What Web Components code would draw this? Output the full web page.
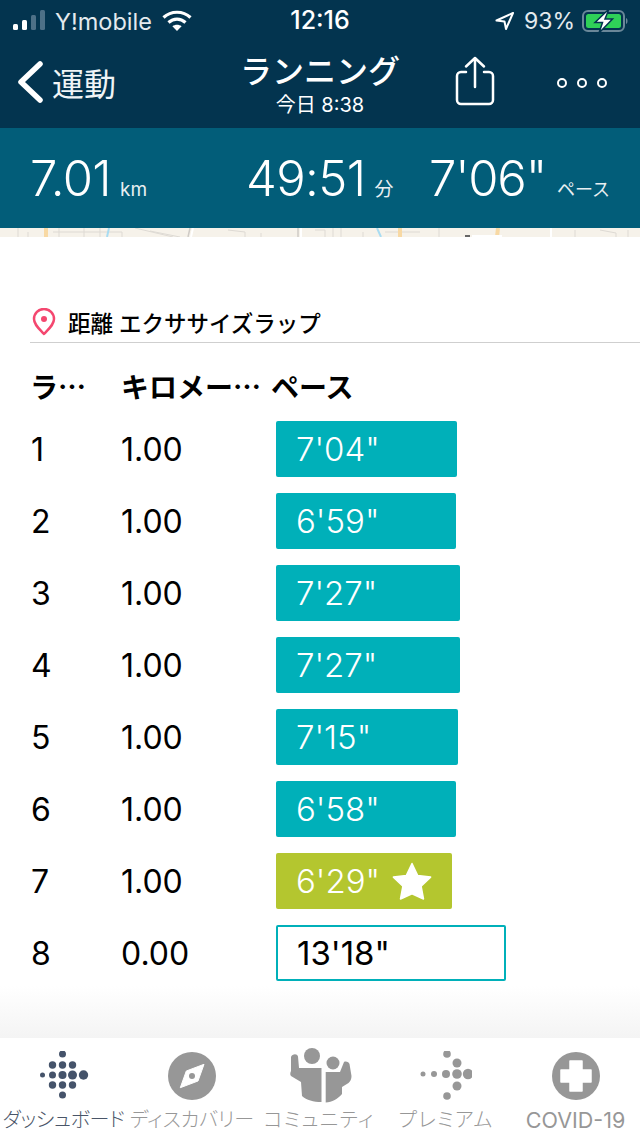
<!DOCTYPE html>
<html lang="ja">
<head>
<meta charset="utf-8">
<title>ランニング</title>
<style>
html, body { margin: 0; padding: 0; background: #fff; }
body { width: 640px; height: 1136px; overflow: hidden; display: flex; flex-direction: column; font-family: Inter, "Noto Sans CJK JP", sans-serif; }
</style>
</head>
<body>
<fit-status-bar></fit-status-bar>
<fit-nav-bar title="ランニング" subtitle="今日 8:38" back="運動"></fit-nav-bar>
<fit-summary></fit-summary>
<fit-map-strip></fit-map-strip>
<fit-lap-table>
    <fit-lap-row lap="1" km="1.00" pace="7'04&quot;" width="181"></fit-lap-row>
    <fit-lap-row lap="2" km="1.00" pace="6'59&quot;" width="180"></fit-lap-row>
    <fit-lap-row lap="3" km="1.00" pace="7'27&quot;" width="184"></fit-lap-row>
    <fit-lap-row lap="4" km="1.00" pace="7'27&quot;" width="184"></fit-lap-row>
    <fit-lap-row lap="5" km="1.00" pace="7'15&quot;" width="182"></fit-lap-row>
    <fit-lap-row lap="6" km="1.00" pace="6'58&quot;" width="180"></fit-lap-row>
    <fit-lap-row lap="7" km="1.00" pace="6'29&quot;" width="176" kind="best"></fit-lap-row>
    <fit-lap-row lap="8" km="0.00" pace="13'18&quot;" width="230" kind="partial"></fit-lap-row>
</fit-lap-table>
<fit-tab-bar></fit-tab-bar>

<script>
class FitStatusBar extends HTMLElement {
    constructor() {
        super();
        this.attachShadow({ mode: "open" });
    }

    connectedCallback() {
        this.shadowRoot.innerHTML = `
            <style>
                :host { display: flex; align-items: center; height: 40px; flex: none; box-sizing: border-box; padding: 2px 0 0 13px; background: #03344f; color: #fff; font-size: 23.500px; position: relative; }
                .left, .right { display: flex; align-items: center; }
                .carrier { margin-left: 9px; color: #e4eaee; }
                .wifi { margin-left: 10px; }
                .time { position: absolute; left: 0; right: 0; top: 7px; text-align: center; font-weight: 500; font-size: 25px; line-height: 27px; }
                .right { margin-left: auto; color: #e4eaee; }
                .pct { margin: 0 7px 0 9px; font-size: 23px; }
                .battery { margin-right: 11px; }
            </style>
            <div class="left">
                <svg width="33" height="22" viewBox="0 0 33 22">
                    <rect x="0" y="14" width="5" height="6" rx="1.500" fill="#fff"/>
                    <rect x="9" y="10" width="5" height="10" rx="1.500" fill="#fff"/>
                    <rect x="18" y="5" width="5" height="15" rx="1.500" fill="#4d7087"/>
                    <rect x="27" y="0" width="5" height="20" rx="1.500" fill="#4d7087"/>
                </svg>
                <span class="carrier">Y!mobile</span>
                <svg class="wifi" width="30" height="22" viewBox="0 0 30 22" fill="none" stroke="#fff" stroke-width="3.200">
                    <path d="M1.500 7.500C9 .5 21 .5 28.500 7.500"/>
                    <path d="M6.500 12.500C11.500 8 18.500 8 23.500 12.500"/>
                    <path d="M15 21l-4.600-4.800c2.600-2 6.600-2 9.200 0z" fill="#fff" stroke="none"/>
                </svg>
            </div>
            <div class="time">12:16</div>
            <div class="right">
                <svg width="20" height="20" viewBox="0 0 20 20" fill="none" stroke="#fff" stroke-width="2" stroke-linejoin="round"><path d="M18 2L1.500 9.500l8 1 1.500 7.500z"/></svg>
                <span class="pct">93%</span>
                <svg class="battery" width="47" height="26" viewBox="0 0 47 26">
                    <rect x="1" y="3" width="41" height="20" rx="5" fill="none" stroke="#6a8799" stroke-width="2"/>
                    <rect x="4" y="6" width="35" height="14" rx="2.500" fill="#2fd158"/>
                    <path d="M44 10c2 .5 2 5.500 0 6z" fill="#6a8799"/>
                    <path d="M27 1L13 14.500h7.500L17 25l13.500-14H23z" fill="#fff" stroke="#03344f" stroke-width="1.500"/>
                </svg>
            </div>
        `;
    }
}

class FitNavBar extends HTMLElement {
    constructor() {
        super();
        this.attachShadow({ mode: "open" });
    }

    connectedCallback() {
        this.shadowRoot.innerHTML = `
            <style>
                :host { display: flex; align-items: center; flex: none; height: 88px; box-sizing: border-box; background: #03344f; color: #fff; position: relative; padding-left: 17px; }
                .back { display: flex; align-items: center; gap: 9px; font-size: 32px; color: #f0f4f6; margin-top: -4px; }
                .title { position: absolute; left: 160px; width: 320px; top: 14px; text-align: center; }
                .main { font-size: 32px; font-weight: 500; line-height: 36px; }
                .sub { font-size: 20px; line-height: 24px; margin-top: 3px; }
                .share { position: absolute; left: 455px; top: 16px; }
                .more { position: absolute; left: 557px; top: 38px; display: flex; gap: 10px; }
                .more i { display: block; width: 10px; height: 10px; border: 2px solid #fff; border-radius: 50%; box-sizing: border-box; }
            </style>
            <div class="back">
                <svg width="26" height="42" viewBox="0 0 26 42" fill="none" stroke="#fff" stroke-width="5.500" stroke-linecap="round" stroke-linejoin="round"><path d="M23 3L4 21l19 18"/></svg>
                <span>${this.getAttribute('back')}</span>
            </div>
            <div class="title">
                <div class="main">${this.getAttribute('title')}</div>
                <div class="sub">${this.getAttribute('subtitle')}</div>
            </div>
            <svg class="share" width="40" height="50" viewBox="0 0 40 50" fill="none" stroke="#fff" stroke-width="2.500" stroke-linecap="round" stroke-linejoin="round">
                <path d="M11 16H6a4 4 0 0 0-4 4v24a4 4 0 0 0 4 4h28a4 4 0 0 0 4-4V20a4 4 0 0 0-4-4h-5"/>
                <path d="M20 31V2M11 10.500L20 2l9 8.500"/>
            </svg>
            <div class="more"><i></i><i></i><i></i></div>
        `;
    }
}

class FitSummary extends HTMLElement {
    constructor() {
        super();
        this.attachShadow({ mode: "open" });
    }

    connectedCallback() {
        this.shadowRoot.innerHTML = `
            <style>
                :host { display: block; flex: none; height: 100px; background: #025d79; color: #fff; position: relative; }
                div { position: absolute; top: 21px; white-space: nowrap; font-weight: 300; font-size: 49px; line-height: 60px; letter-spacing: -.6px; }
                small { font-size: 19px; font-weight: 400; margin-left: 9px; color: #e8eff2; letter-spacing: 0; }
            </style>
            <div style="left: 30px">7.01<small>km</small></div>
            <div style="left: 246px">49:51<small>分</small></div>
            <div style="left: 429px; letter-spacing: -1.200px">7'06"<small style="margin-left: 11px; font-size: 18px">ペース</small></div>
        `;
    }
}

class FitMapStrip extends HTMLElement {
    constructor() {
        super();
        this.attachShadow({ mode: "open" });
    }

    connectedCallback() {
        this.shadowRoot.innerHTML = `
            <style>
                :host { display: block; flex: none; height: 9px; background: #f6f2ea; }
                svg { display: block; }
            </style>
            <svg width="640" height="9" viewBox="0 0 640 9" fill="none" stroke="#dedad4" stroke-width="1">
                <path d="M18 0v9M28 4v5M59 0v9M53 4h69M84 0v9M100 0v9M122 4v5M135 0l38 9M150 3l30 6M228 2l17 2v5M261 5v4M315 2h10v7M333 0v9M341 0v9M363 4v5M385 4h35M439 0v9M575 2v7M600 2l16 3v4M628 2v7"/>
                <path d="M190 0l-2 9M298 0v9" stroke="#cfcbc6" stroke-width="1.500"/>
                <path d="M193 0l-2 9M301 0v9M551 0v9" stroke="#ffffff" stroke-width="2"/>
                <path d="M46 0v9M400 0v9M498 0l-1 9" stroke="#f8d9a4" stroke-width="4"/>
                <path d="M109 0l-2 9M377 0l4 9" stroke="#a8dcf2" stroke-width="2"/>
                <path d="M472 8h30" stroke="#fff" stroke-width="2"/>
                <path d="M465 8h5" stroke="#666" stroke-width="2"/>
            </svg>
        `;
    }
}

class FitLapTable extends HTMLElement {
    constructor() {
        super();
        this.attachShadow({ mode: "open" });
    }

    connectedCallback() {
        this.shadowRoot.innerHTML = `
            <style>
                :host { display: block; flex: 1; min-height: 0; position: relative; overflow: hidden; background: #fff; color: #000; padding: 72px 0 0 30px; }
                .heading { display: flex; align-items: center; gap: 11px; height: 34px; box-sizing: border-box; border-bottom: 1px solid #cfcfcf; font-size: 22.500px; font-weight: 500; padding-bottom: 7px; white-space: nowrap; }
                .cols { display: flex; align-items: center; height: 54px; margin-top: 16px; font-size: 28px; font-weight: 700; }
                .cols span { white-space: nowrap; font-family: "Noto Sans CJK JP", sans-serif; }
                .rows { display: flex; flex-direction: column; gap: 16px; margin-top: 8px; }
                .fade { position: absolute; left: 0; right: 0; bottom: 0; height: 52px; background: linear-gradient(rgba(244,244,244,0), #f4f4f4); pointer-events: none; }
            </style>
            <div class="heading">
                <svg width="26" height="28" viewBox="0 0 26 28" style="margin-left:1px">
                    <path d="M13 26C8 20.500 3 16.500 3 11a10 10 0 0 1 20 0c0 5.500-5 9.500-10 15z" fill="none" stroke="#f4476f" stroke-width="2.500" stroke-linejoin="round"/>
                    <circle cx="13" cy="11" r="3" fill="#f4476f"/>
                </svg>
                <span>距離 エクササイズラップ</span>
            </div>
            <div class="cols">
                <span style="width: 91px">ラ…</span>
                <span style="width: 150px">キロメー…</span>
                <span>ペース</span>
            </div>
            <div class="rows"><slot></slot></div>
            <div class="fade"></div>
        `;
    }
}

class FitLapRow extends HTMLElement {
    constructor() {
        super();
        this.attachShadow({ mode: "open" });
    }

    connectedCallback() {
        const kind = this.getAttribute('kind') ?? 'normal';
        const star = kind === 'best'
            ? `<svg width="40" height="38" viewBox="0 0 40 38"><path d="M20 1.500l5.600 11.900 13 1.700-9.500 9 2.400 12.900L20 31.700 8.500 37l2.400-12.900-9.500-9 13-1.700z" fill="#fff" stroke="#fff" stroke-width="1.500" stroke-linejoin="round"/></svg>`
            : '';
        this.shadowRoot.innerHTML = `
            <style>
                :host { display: flex; align-items: center; height: 56px; font-size: 32px; }
                .lap { width: 90px; margin-left: 1px; }
                .km { width: 155px; }
                .bar { display: flex; align-items: center; justify-content: space-between; box-sizing: border-box; height: 56px; padding: 0 20px 0 20px; border-radius: 2px; color: #fff; background: #00b0b9; font-weight: 300; font-size: 33px; }
                .best { background: #b4c62f; }
                .partial { background: #fff; color: #000; border: 2px solid #00b0b9; padding-left: 19px; font-weight: 400; }
            </style>
            <span class="lap">${this.getAttribute('lap')}</span>
            <span class="km">${this.getAttribute('km')}</span>
            <div class="bar ${kind}" style="width: ${this.getAttribute('width')}px">
                <span>${this.getAttribute('pace')}</span>${star}
            </div>
        `;
    }
}

class FitTabBar extends HTMLElement {
    constructor() {
        super();
        this.attachShadow({ mode: "open" });
    }

    dots(list, color) {
        return list.map(([x, y, r]) => `<circle cx="${x}" cy="${y}" r="${r}" fill="${color}"/>`).join('');
    }

    connectedCallback() {
        const dash = [[24.5,3,3.5],[14.5,14,3.7],[24.5,14,3.7],[34.5,14,3.7],[4.5,24,2.5],[14.5,24,3.5],[24.5,24,4],[34.5,24,4.5],[45.5,24,4.7],[14.5,34,3.7],[24.5,34,3.7],[34.5,34,3.7],[24.5,44,3.5]];
        const prem = [[27,3,3.8],[37,12,4.5],[3,23,2.5],[14,23,3],[26,23,4],[37,23,4.8],[48,23,5.2],[37,35,4.5],[27,45,3.8]];
        this.shadowRoot.innerHTML = `
            <style>
                :host { display: grid; grid-template-columns: 127px 130px 124px 130px 129px; flex: none; height: 98px; box-sizing: border-box; background: #fff; color: #979797; font-size: 20px; }
                .tab { display: flex; flex-direction: column; align-items: center; padding-top: 13px; min-width: 0; white-space: nowrap; font-feature-settings: "palt"; font-weight: 300; }
                .tab svg { display: block; height: 50px; flex: none; }
                .tab span { margin-top: 6px; line-height: 26px; }
                .on { color: #4a5568; }
                .wide { letter-spacing: 1.300px; }
                .latin { font-size: 21.500px; font-weight: 400; }
            </style>
            <div class="tab on">
                <svg width="52" height="50" viewBox="0 0 52 50">${this.dots(dash, '#45536a')}</svg>
                <span style="letter-spacing: -.3px">ダッシュボード</span>
            </div>
            <div class="tab">
                <svg width="50" height="50" viewBox="0 0 50 50">
                    <circle cx="25" cy="25" r="24" fill="#979797"/>
                    <path d="M37 13.300L31 30 13.300 36.700 19.300 20z" fill="#fff" stroke="#fff" stroke-width="1" stroke-linejoin="round"/>
                    <circle cx="25" cy="25" r="3" fill="#979797"/>
                </svg>
                <span>ディスカバリー</span>
            </div>
            <div class="tab">
                <svg width="66" height="58" viewBox="8 6 66 58" fill="#979797" style="height:58px;margin:-5px 0 -3px 4px">
                    <circle cx="32" cy="16" r="8"/>
                    <circle cx="53" cy="23" r="6.500"/>
                    <path d="M11 17c1-3 6-4 7-.5l1 11.500h22.500v34c-8 0-15-2-19.500-6l-1-14-10-6c-1-1-1-3 0-5z"/>
                    <path d="M45.700 32H60l2-5 2-5c2-1 5 0 5.500 2l2 12c0 3-1 5-3 7l-6.500 4v7c-4 5-10 8-16.300 8.500z"/>
                </svg>
                <span class="wide">コミュニティ</span>
            </div>
            <div class="tab">
                <svg width="52" height="50" viewBox="0 0 52 50">${this.dots(prem, '#979797')}</svg>
                <span class="wide">プレミアム</span>
            </div>
            <div class="tab">
                <svg width="50" height="50" viewBox="0 0 50 50">
                    <circle cx="25" cy="25" r="24" fill="#979797"/>
                    <path d="M19 10h12v9h9v12h-9v9H19v-9h-9V19h9z" fill="#fff" stroke="#fff" stroke-width="1.500" stroke-linejoin="round"/>
                </svg>
                <span class="latin">COVID-19</span>
            </div>
        `;
    }
}

customElements.define('fit-status-bar', FitStatusBar);
customElements.define('fit-nav-bar', FitNavBar);
customElements.define('fit-summary', FitSummary);
customElements.define('fit-map-strip', FitMapStrip);
customElements.define('fit-lap-table', FitLapTable);
customElements.define('fit-lap-row', FitLapRow);
customElements.define('fit-tab-bar', FitTabBar);
</script>
</body>
</html>
